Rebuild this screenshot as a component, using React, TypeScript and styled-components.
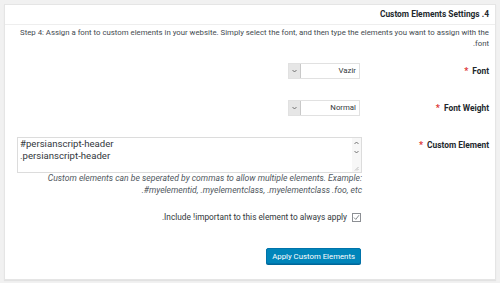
import React from 'react';
import styled, { createGlobalStyle } from 'styled-components';

const GlobalStyle = createGlobalStyle`
  html, body {
    margin: 0;
    padding: 0;
    background: #f1f1f1;
  }
  body {
    width: 500px;
    height: 283px;
    overflow: hidden;
    font-family: Roboto, "Liberation Sans", sans-serif;
  }
`;

const Page = styled.div`
  padding: 4px;
`;

const Card = styled.section`
  direction: rtl;
  background: #ffffff;
  border: 1px solid #e5e5e5;
  box-shadow: 0 1px 1px rgba(0, 0, 0, 0.06);
  height: 276px;
  box-sizing: border-box;
`;

const CardHeader = styled.h2`
  margin: 0;
  height: 20px;
  line-height: 19px;
  padding: 0 6px;
  font-size: 8.4px;
  font-weight: 700;
  color: #23282d;
  border-bottom: 1px solid #eee;
  box-sizing: border-box;
`;

const CardBody = styled.div`
  padding: 2px 6px 0 12px;
`;

const Intro = styled.p`
  margin: 0;
  font-size: 7.8px;
  line-height: 11px;
  color: #444a50;
`;

const FormTable = styled.div`
  display: grid;
  grid-template-columns: 127px 1fr;
  margin-top: 10px;
`;

const Label = styled.div<{ $top?: number }>`
  display: flex;
  align-items: center;
  align-self: start;
  gap: 4px;
  height: 16px;
  font-size: 8.4px;
  font-weight: 700;
  color: #23282d;
  padding-top: ${({ $top }) => $top ?? 0}px;
`;

const Required = styled.span`
  color: #dc3232;
  font-size: 9px;
`;

const Field = styled.div<{ $top?: number; $wide?: boolean }>`
  grid-column: ${({ $wide }) => ($wide ? 2 : 'auto')};
  padding-top: ${({ $top }) => $top ?? 0}px;
  display: flex;
  flex-direction: column;
  align-items: flex-start;
`;

const SelectBox = styled.div`
  display: flex;
  width: 72px;
  height: 16px;
  box-sizing: border-box;
  border: 1px solid #e1e1e1;
  background: #fff;
  margin-right: 2px;
`;

const SelectValue = styled.span`
  flex: 1;
  font-size: 7.8px;
  line-height: 14px;
  color: #32373c;
  padding-right: 3px;
`;

const SelectArrow = styled.span`
  width: 11px;
  display: flex;
  align-items: center;
  justify-content: center;
  background: #e6e6e6;
  border-right: 1px solid #c9c9c9;
`;

const TextBox = styled.div`
  direction: ltr;
  display: flex;
  width: 345px;
  height: 36px;
  box-sizing: border-box;
  border: 1px solid #dcdcdc;
  background: #fff;
`;

const TextArea = styled.textarea`
  flex: 1;
  border: none;
  outline: none;
  resize: none;
  padding: 0 2px;
  margin: 0;
  font-family: Roboto, "Liberation Sans", sans-serif;
  font-size: 9.6px;
  line-height: 12px;
  color: #32373c;
  overflow: hidden;
  background: transparent;
`;

const ScrollBar = styled.div`
  width: 9px;
  display: flex;
  flex-direction: column;
  align-items: center;
  padding-top: 3px;
  gap: 5px;
  background: #f7f7f7;
`;

const Hint = styled.p`
  margin: -1px 0 0;
  width: 345px;
  font-size: 8.6px;
  line-height: 12px;
  font-style: italic;
  color: #50575e;
`;

const CheckRow = styled.label`
  display: flex;
  align-items: center;
  gap: 5px;
  font-size: 8.3px;
  color: #32373c;
  margin-right: 1px;
`;

const CheckMark = styled.span`
  width: 9px;
  height: 9px;
  box-sizing: border-box;
  border: 1px solid #8c8f94;
  display: flex;
  align-items: center;
  justify-content: center;
  background: #fff;
`;

const PrimaryButton = styled.button`
  font-family: Roboto, "Liberation Sans", sans-serif;
  font-size: 7.8px;
  height: 16px;
  padding: 0 5px;
  margin-right: 1px;
  color: #fff;
  background: #0085ba;
  border: 1px solid #0073aa;
  border-radius: 2px;
  box-shadow: 0 1px 0 #006799;
  cursor: pointer;
`;

const Chevron = ({ up }: { up?: boolean }) => (
  <svg width="5" height="4" viewBox="0 0 5 4">
    <path
      d={up ? 'M0.5 3 L2.5 1 L4.5 3' : 'M0.5 1 L2.5 3 L4.5 1'}
      fill="none"
      stroke="#555"
      strokeWidth="0.8"
    />
  </svg>
);

const Grip = () => (
  <svg width="5" height="5" viewBox="0 0 5 5" style={{ marginTop: 'auto', marginBottom: '1px' }}>
    <path d="M4.5 1 L1 4.5 M4.5 3 L3 4.5" stroke="#999" strokeWidth="0.6" />
  </svg>
);

export default function App() {
  return (
    <Page>
      <GlobalStyle />
      <Card>
        <CardHeader>4. Custom Elements Settings</CardHeader>
        <CardBody>
          <Intro>
            Step 4: Assign a font to custom elements in your website. Simply select the font,
            and then type the elements you want to assign with the font.
          </Intro>

          <FormTable>
            <Label $top={4}>
              Font <Required>*</Required>
            </Label>
            <Field $top={4}>
              <SelectBox>
                <SelectValue>Vazir</SelectValue>
                <SelectArrow>
                  <Chevron />
                </SelectArrow>
              </SelectBox>
            </Field>

            <Label $top={21}>
              Font Weight <Required>*</Required>
            </Label>
            <Field $top={21}>
              <SelectBox>
                <SelectValue>Normal</SelectValue>
                <SelectArrow>
                  <Chevron />
                </SelectArrow>
              </SelectBox>
            </Field>

            <Label $top={21}>
              Custom Element <Required>*</Required>
            </Label>
            <Field $top={21}>
              <TextBox>
                <TextArea
                  defaultValue={'#persianscript-header\n.persianscript-header'}
                  spellCheck={false}
                />
                <ScrollBar>
                  <Chevron up />
                  <Chevron />
                  <Grip />
                </ScrollBar>
              </TextBox>
              <Hint>
                Custom elements can be seperated by commas to allow multiple elements. Example:
                #myelementid, .myelementclass, .myelementclass .foo, etc.
              </Hint>
            </Field>

            <Field $wide $top={16}>
              <CheckRow>
                <CheckMark>
                  <svg width="7" height="7" viewBox="0 0 7 7">
                    <path d="M1 3.6 L2.8 5.4 L6 1.2" fill="none" stroke="#50575e" strokeWidth="0.7" />
                  </svg>
                </CheckMark>
                Include !important to this element to always apply.
              </CheckRow>
            </Field>

            <Field $wide $top={26}>
              <PrimaryButton type="button">Apply Custom Elements</PrimaryButton>
            </Field>
          </FormTable>
        </CardBody>
      </Card>
    </Page>
  );
}
